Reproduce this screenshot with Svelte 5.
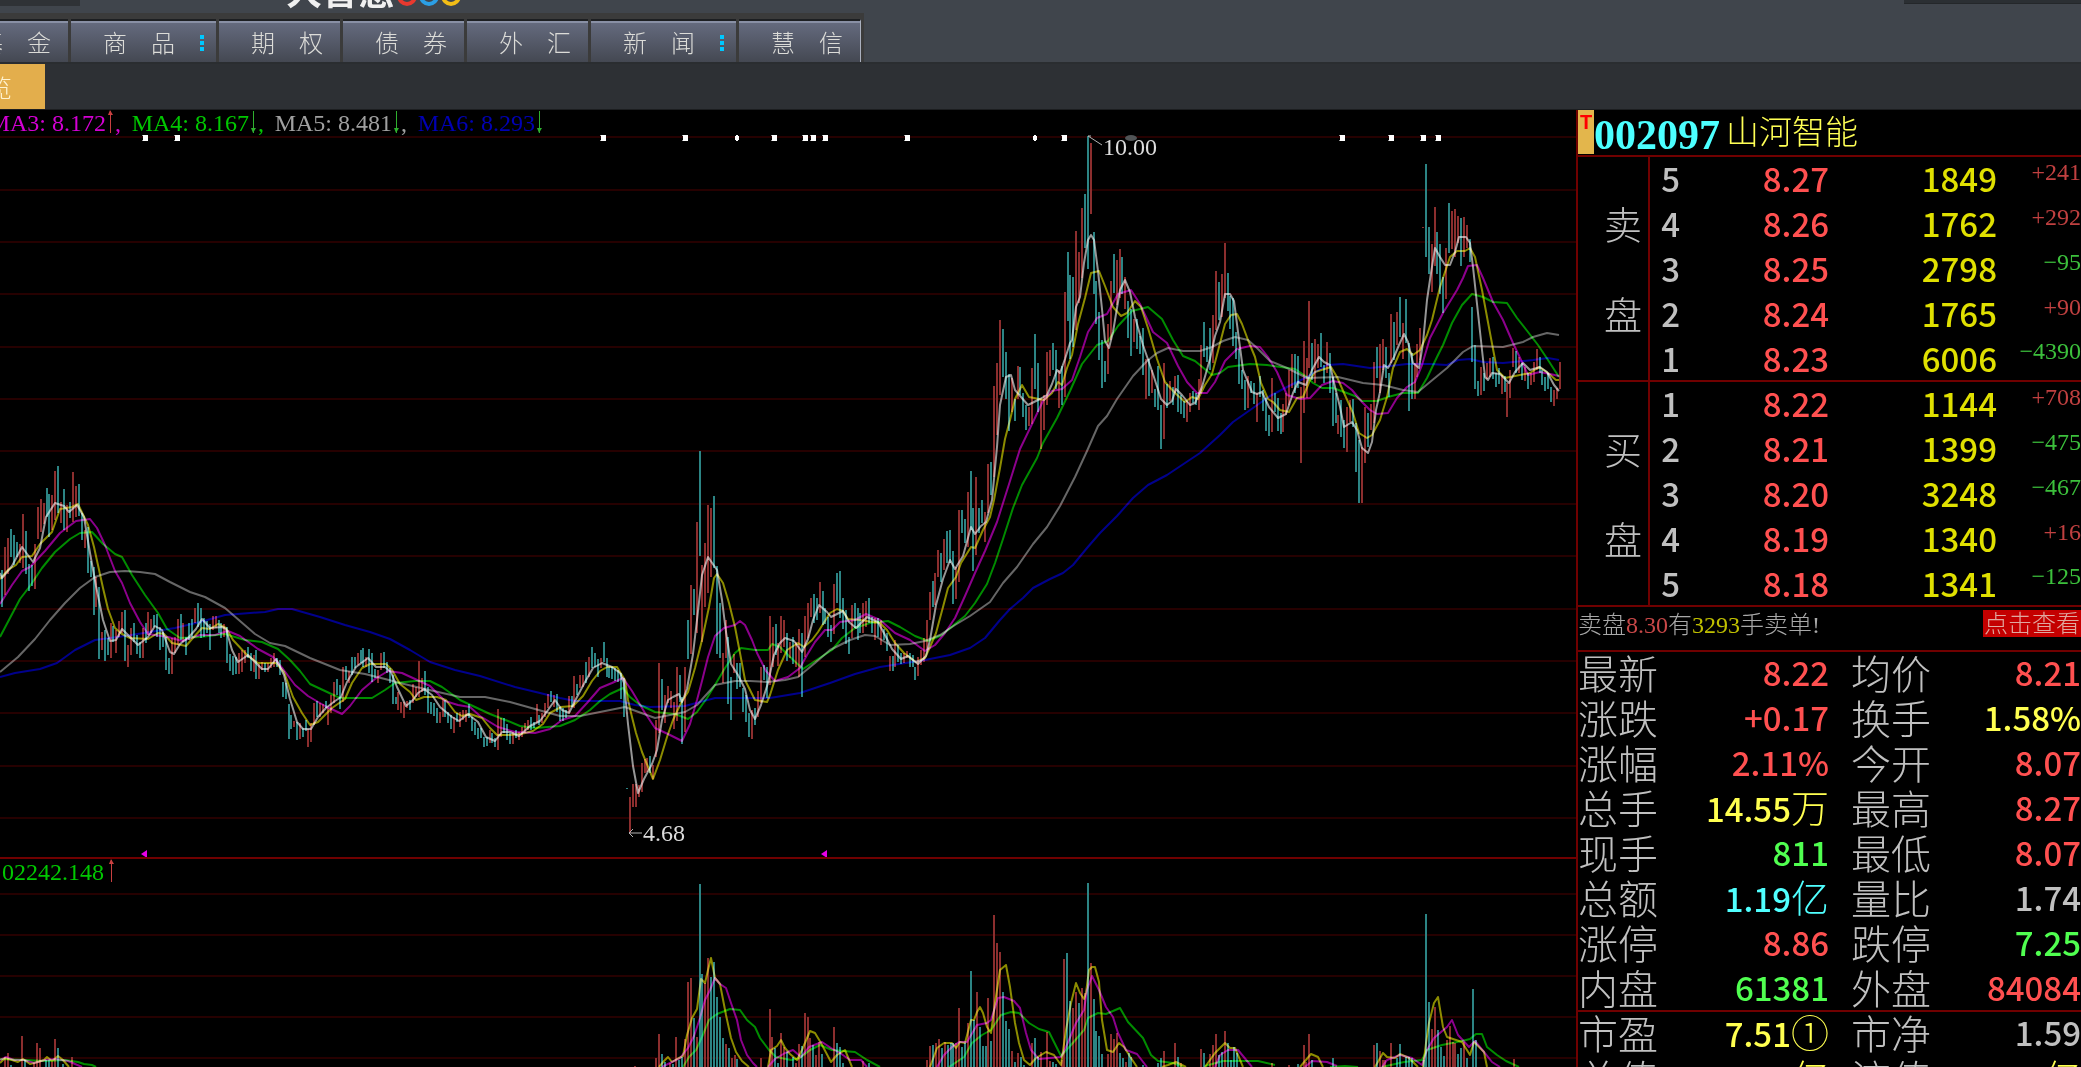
<script lang="ts">
  interface Bar {
    x: number;
    top: number;
    bottom: number;
    up: boolean;
  }

  const navItems = [
    { label: "基　金", more: false },
    { label: "商　品", more: true },
    { label: "期　权", more: false },
    { label: "债　券", more: false },
    { label: "外　汇", more: false },
    { label: "新　闻", more: true },
    { label: "慧　信", more: false },
  ];

  const averages = [
    { name: "MA3", value: "8.172", tone: "magenta", up: true },
    { name: "MA4", value: "8.167", tone: "green", up: false },
    { name: "MA5", value: "8.481", tone: "gray", up: false },
    { name: "MA6", value: "8.293", tone: "blue", up: false },
  ];

  const asks = [
    { side: "", level: 5, price: "8.27", volume: 1849, delta: 241 },
    { side: "卖", level: 4, price: "8.26", volume: 1762, delta: 292 },
    { side: "", level: 3, price: "8.25", volume: 2798, delta: -95 },
    { side: "盘", level: 2, price: "8.24", volume: 1765, delta: 90 },
    { side: "", level: 1, price: "8.23", volume: 6006, delta: -4390 },
  ];

  const bids = [
    { side: "", level: 1, price: "8.22", volume: 1144, delta: 708 },
    { side: "买", level: 2, price: "8.21", volume: 1399, delta: -475 },
    { side: "", level: 3, price: "8.20", volume: 3248, delta: -467 },
    { side: "盘", level: 4, price: "8.19", volume: 1340, delta: 16 },
    { side: "", level: 5, price: "8.18", volume: 1341, delta: -125 },
  ];

  const quote = [
    { label: "最新", value: "8.22", unit: "", tone: "red" },
    { label: "均价", value: "8.21", unit: "", tone: "red" },
    { label: "涨跌", value: "+0.17", unit: "", tone: "red" },
    { label: "换手", value: "1.58%", unit: "", tone: "yellow" },
    { label: "涨幅", value: "2.11%", unit: "", tone: "red" },
    { label: "今开", value: "8.07", unit: "", tone: "red" },
    { label: "总手", value: "14.55", unit: "万", tone: "yellow" },
    { label: "最高", value: "8.27", unit: "", tone: "red" },
    { label: "现手", value: "811", unit: "", tone: "lime" },
    { label: "最低", value: "8.07", unit: "", tone: "red" },
    { label: "总额", value: "1.19", unit: "亿", tone: "cyan" },
    { label: "量比", value: "1.74", unit: "", tone: "silver" },
    { label: "涨停", value: "8.86", unit: "", tone: "red" },
    { label: "跌停", value: "7.25", unit: "", tone: "lime" },
    { label: "内盘", value: "61381", unit: "", tone: "lime" },
    { label: "外盘", value: "84084", unit: "", tone: "red" },
  ];

  const valuation = [
    { label: "市盈", value: "7.51", unit: "①", tone: "yellow" },
    { label: "市净", value: "1.59", unit: "", tone: "silver" },
    { label: "总值", value: "", unit: "亿", tone: "yellow" },
    { label: "流值", value: "", unit: "亿", tone: "yellow" },
  ];

  // each run spreads its bars evenly from first to last; r = rising, t = falling
  const priceRuns = [
    {
      from: 2,
      to: 94,
      bars: "t570-607 r547-595 r538-574 t529-557 t535-565 t542-557 r544-563 r514-568 t531-574 t564-591 t565-586 r544-589 r507-539 r499-532 r503-524 t488-517 t494-537 r495-530 r471-520 t466-513 r502-523 t489-530 r505-532 t502-518 r472-522 r486-517 t484-516 t513-540 r530-548 t527-573 t561-577 t567-615",
    },
    {
      from: 96,
      to: 198,
      bars: "r577-607 t587-659 r632-650 t630-661 t638-655 r623-658 t626-642 r630-653 r621-637 r612-633 t610-661 r645-667 r628-655 t623-642 t635-654 t642-658 r628-658 t623-643 r612-635 r619-633 t615-627 t614-637 t627-650 t632-647 t637-670 t658-674 r638-674 r637-653 r619-645 t614-640 r623-642 t637-655 t623-640 t619-637 r608-623 t603-627",
    },
    {
      from: 201,
      to: 306,
      bars: "t608-638 t618-637 t621-633 t624-650 r616-630 r616-628 t620-633 t623-638 r624-637 t627-663 t654-671 t656-675 t657-674 r653-674 r650-672 r650-663 t647-658 t653-671 r655-672 t650-679 r664-679 r662-670 t663-672 r663-672 r658-668 r653-667 t658-667 t660-675 t682-697 t683-699 t704-739 t715-729 r721-727 t722-740 r723-739 t728-737 t720-731",
    },
    {
      from: 308,
      to: 416,
      bars: "r729-747 r723-742 r703-725 t701-717 r703-717 r704-713 t701-708 r708-725 r695-713 r682-703 t679-695 t685-709 r667-702 t666-680 r671-683 t657-675 t657-668 r653-665 t650-663 t648-667 r657-667 t649-673 t653-682 t669-678 r670-683 r653-670 t652-668 t662-673 t668-683 t675-704 t697-704 r692-710 r702-713 r702-718 r701-708 t700-710 r684-703 r687-697",
    },
    {
      from: 419,
      to: 516,
      bars: "r661-697 r678-692 t671-695 t687-713 t702-714 t703-716 t708-723 r712-723 r700-717 t700-717 t712-723 t715-729 r717-733 t713-722 r712-727 r710-720 r710-722 t704-718 t717-731 t722-735 t728-739 t728-738 t737-747 t737-746 r730-743 t733-743 t738-747 r709-750 r718-737 t718-733 t724-740 t733-744 r732-744 t730-738",
    },
    {
      from: 519,
      to: 624,
      bars: "r732-740 r727-737 r723-733 r720-730 t717-730 t722-728 r704-723 t715-725 r713-723 r703-717 r694-708 t691-702 r695-707 t694-712 t707-721 t708-721 t710-718 r696-713 t696-707 r676-708 t684-695 r675-688 r675-687 t662-683 r657-677 t647-668 t653-667 t659-677 r658-668 t642-662 t658-677 t667-678 t667-679 t668-681 t670-682 t673-699 t678-717",
    },
    {
      from: 627,
      to: 700,
      bars: "t788-789 r797-833 r784-807 r784-807 r785-797 r763-792 r759-773 r758-772 t756-773 r765-779 r720-757 r663-733 t679-710 r695-723 r686-703 r691-708 r702-729 r667-721 t675-702 t697-744 r667-732 t620-659 r585-654 t589-615 r522-633 t451-556",
    },
    {
      from: 702,
      to: 802,
      bars: "r565-642 r543-607 r505-593 r508-577 t496-568 t566-654 t603-658 r653-683 r620-658 t637-704 t677-720 r654-673 t663-689 t663-687 t688-712 t695-722 t713-737 r710-739 t708-725 r691-717 r667-703 t665-680 t667-698 r616-685 r627-667 t624-655 r643-666 r616-653 r620-647 t633-661 r642-658 t637-664 r642-667 r629-677 t633-697",
    },
    {
      from: 805,
      to: 913,
      bars: "r616-657 r603-638 r598-617 t594-623 t598-620 r582-613 t591-625 t608-624 t617-637 t625-642 r584-634 t573-603 t571-618 t598-629 t610-644 t637-654 r605-638 t603-628 t608-640 t613-633 r603-633 r601-627 t598-623 t617-633 r618-640 t618-637 r620-645 t629-640 t633-651 r656-671 t656-671 r640-667 t645-662 t653-664 r653-663 r651-658 t653-667 t655-667",
    },
    {
      from: 915,
      to: 991,
      bars: "t667-680 r657-676 r650-665 r638-662 r620-650 r592-620 t581-607 r573-605 r550-577 t553-582 r539-570 t531-563 t530-563 t551-604 r567-599 r510-582 t510-533 t519-543 r492-547 t471-530 t508-571 r477-555 t508-533 t500-523 r512-542 r464-513 t462-495",
    },
    {
      from: 994,
      to: 1094,
      bars: "r386-477 r363-435 r320-395 t329-377 t352-399 t374-431 r378-412 t399-421 r366-399 t367-395 t393-417 t405-430 r407-426 r368-424 t334-389 t363-412 r399-449 r395-430 r352-405 r350-376 t343-370 t350-389 r370-408 t366-405 r292-397 t252-321 t275-359 t277-347 r231-330 r252-303 r208-278 t194-248 t136-269 r143-214 t232-294",
    },
    {
      from: 1096,
      to: 1199,
      bars: "t281-324 t312-360 t340-388 t361-382 r324-374 r281-340 t254-293 r260-305 r249-298 t257-294 r277-309 t301-338 t309-356 r319-342 t319-349 t336-354 t328-375 r359-399 t359-396 r370-393 t389-407 t366-410 t405-449 r363-439 t384-408 r381-401 t387-405 r376-393 t375-412 t395-414 t401-418 r401-422 r393-412 t391-403 t393-405 r379-410",
    },
    {
      from: 1201,
      to: 1307,
      bars: "r345-393 t322-357 t346-362 t328-370 r315-363 r271-330 t282-320 r274-317 r243-298 t273-311 t296-329 t298-346 t332-359 t349-384 t370-389 t380-410 r376-408 t381-393 t383-404 r393-422 t376-397 t390-411 t398-431 t415-436 r378-432 t393-412 t398-431 t413-434 r404-432 r393-415 r370-405 r354-388 t354-393 t356-388 r387-463 r341-413 r358-398",
    },
    {
      from: 1309,
      to: 1415,
      bars: "r301-368 t343-380 r339-383 r344-368 t333-367 t365-383 r342-373 t353-393 t377-426 t393-423 r415-434 t400-437 t420-448 r407-452 r400-422 t399-427 t423-472 t440-503 r447-503 r407-463 t413-447 r404-430 r362-423 t347-378 r344-393 r339-370 t347-378 t373-397 r314-363 t322-360 r312-345 t297-337 r323-359 t299-343 t343-411 t353-399 r363-399",
    },
    {
      from: 1417,
      to: 1560,
      bars: "r344-377 r328-360 r227-228 t164-257 t227-274 r244-292 r207-266 t232-274 t244-294 t277-313 r248-299 t203-253 r211-249 r209-257 r216-243 t218-266 r217-257 r225-248 t239-262 t307-362 t345-389 t381-396 r367-395 t373-391 r363-379 r358-377 t357-379 t373-387 t368-384 r375-394 t376-392 r383-417 r370-398 r348-367 t351-373 r357-373 t363-380 r367-381 t373-389 r373-385 r362-382 r349-370 t357-373 t370-385 t377-391 t373-389 t387-402 r390-406 r388-399 r362-389",
    },
  ];

  const priceBars: Bar[] = priceRuns.flatMap((run) => {
    const tokens = run.bars.split(" ");
    const step = (run.to - run.from) / (tokens.length - 1);
    return tokens.map((token, i) => {
      const [top, bottom] = token.slice(1).split("-").map(Number);
      return { x: Math.round(run.from + i * step), top, bottom, up: token[0] === "r" };
    });
  });

  const volumeData =
    "r5-1057 r8-1053 t11-1065 r22-1036 t25-1060 r34-1063 r37-1043 r40-1048 t46-1060 t49-1060 r52-1062 r55-1039 t58-1048 t63-1064 r72-1057 " +
    "r635-1066 r656-1058 r659-1034 t662-1054 t665-1062 r670-1063 t673-1064 r676-1037 t679-1060 t682-1057 r685-1039 r688-982 r691-978 t694-1018 r697-1037 t700-884 t702-974 r705-983 r708-958 t711-977 t714-962 t717-997 t720-1017 t723-1038 r726-1044 t729-1048 r732-1058 r735-1055 t737-1059 " +
    "r761-1058 r770-1009 r772-1037 t775-1048 t778-1063 r781-1033 r784-1047 t787-1052 t793-1057 r796-1063 r799-1044 t802-1046 r805-1013 r808-1017 r810-1038 t813-1045 r816-1055 r819-1042 t822-1054 r834-1027 t837-1043 t840-1047 t843-1063 r863-1061 t869-1063 " +
    "r927-1060 r930-1046 t933-1045 r936-1043 r939-1039 t942-1048 r945-1042 t948-1045 t951-1043 t953-1043 r956-1043 r959-1008 t962-1047 t965-1043 r968-1023 t971-971 t974-1020 r977-992 t980-1027 t983-1046 t986-1046 r988-998 t991-1041 r994-915 r997-943 r1000-952 t1003-992 t1006-1021 t1009-1029 r1012-1051 t1015-1062 r1018-1053 t1021-1057 t1024-1065 " +
    "r1032-1043 t1035-1038 t1038-1057 r1041-1052 r1047-1032 r1050-1061 t1053-1062 t1056-1064 r1062-1060 r1064-959 t1067-953 t1070-1001 r1073-1008 r1076-992 t1079-1003 r1082-988 r1085-993 t1088-882 r1091-963 t1094-999 t1096-1031 t1099-1036 t1102-1054 r1108-1054 r1111-1034 r1114-1039 r1117-1033 t1120-1053 t1123-1058 r1126-1062 t1129-1053 t1131-1057 t1143-1065 " +
    "t1158-1063 t1161-1058 r1164-1051 r1175-1043 t1178-1057 r1181-1063 r1201-1049 t1204-1053 r1210-1054 r1213-1045 r1216-1034 t1219-1055 t1222-1052 r1225-1031 t1228-1043 t1231-1060 t1234-1047 t1237-1053 r1272-1063 r1289-1065 t1298-1064 r1304-1045 r1306-1062 r1309-1034 t1312-1060 t1333-1058 " +
    "r1374-1045 t1377-1043 r1380-1051 r1383-1060 r1385-1060 r1391-1043 t1397-1058 t1400-1044 t1406-1057 t1409-1057 t1412-1058 t1424-1060 t1426-914 t1429-1002 r1432-1029 r1435-1007 t1438-1030 t1441-1047 t1444-1056 r1447-1040 r1450-1026 r1453-1042 r1455-1043 t1458-1054 t1461-1048 r1464-1042 t1467-1058 t1473-989 t1476-1040 r1514-1059";

  const volumeBars: Bar[] = volumeData.split(" ").map((token) => {
    const [x, top] = token.slice(1).split("-").map(Number);
    return { x, top, bottom: 1067, up: token[0] === "r" };
  });

  const priceLines = [
    {
      tone: "blue",
      points: "0,677 15,673 40,669 57,663 75,650 95,640 125,636 150,632 175,628 200,622 225,615 250,613 265,612 278,609 292,609 320,617 345,625 370,632 390,639 410,650 430,662 455,670 480,676 515,687 540,693 560,698 575,701 620,701 635,705 650,707 685,706 700,702 715,698 770,698 800,693 830,683 855,674 880,667 925,660 950,655 970,648 985,638 1000,620 1010,609 1023,598 1033,588 1050,579 1063,573 1073,565 1087,548 1100,533 1117,516 1133,498 1148,485 1167,475 1182,465 1200,453 1220,435 1233,422 1253,408 1270,396 1287,387 1307,377 1327,365 1343,364 1370,368 1390,366 1407,364 1430,364 1447,365 1458,360 1470,359 1483,362 1503,363 1533,360 1548,358 1559,360",
    },
    {
      tone: "gray",
      points: "0,672 18,657 35,639 50,620 65,603 80,588 95,577 110,572 125,571 140,572 155,574 170,582 190,592 205,597 225,608 240,621 255,634 270,643 285,646 310,658 340,670 365,674 385,679 400,683 425,689 460,697 485,697 510,702 535,709 560,716 580,716 600,712 625,707 655,718 685,712 697,705 715,685 735,681 750,681 768,682 785,680 798,677 815,663 830,650 850,640 865,635 875,636 890,645 910,644 925,641 940,635 955,625 970,616 980,609 990,602 1003,583 1017,567 1033,544 1047,527 1060,506 1075,477 1087,451 1098,426 1107,416 1117,399 1133,376 1147,361 1157,353 1168,348 1183,351 1200,351 1212,347 1223,341 1235,337 1248,340 1257,348 1270,361 1287,368 1307,378 1338,377 1363,383 1383,385 1403,390 1418,392 1430,382 1447,368 1463,352 1473,346 1503,347 1523,342 1533,337 1547,333 1559,335",
    },
    {
      tone: "green",
      points: "0,637 10,618 20,599 30,586 42,568 55,552 70,539 80,533 92,532 103,544 115,554 122,557 132,575 145,595 158,613 167,629 180,638 200,637 225,634 245,640 262,642 278,649 290,660 300,671 310,684 325,691 340,698 372,698 385,690 395,683 415,681 430,681 442,687 460,700 475,707 490,714 508,721 520,726 535,728 560,726 575,720 590,710 600,701 610,694 623,688 630,697 640,705 655,712 675,714 688,719 697,712 707,698 715,685 725,668 735,653 741,648 755,650 768,650 772,644 780,647 790,657 803,669 818,659 832,650 842,638 855,628 870,623 888,621 900,627 915,636 928,641 942,635 955,624 965,616 975,603 987,584 995,563 1003,539 1013,508 1022,485 1037,458 1043,443 1057,418 1070,391 1082,364 1097,345 1108,341 1118,326 1132,311 1148,307 1162,319 1173,340 1183,356 1195,361 1212,375 1220,373 1228,367 1250,364 1267,365 1295,369 1307,377 1313,383 1322,388 1333,388 1355,396 1362,401 1377,401 1388,397 1403,393 1418,393 1427,378 1437,357 1443,345 1452,323 1462,305 1472,294 1483,297 1493,302 1507,303 1517,318 1528,332 1538,345 1548,360 1559,377",
    },
    {
      tone: "magenta",
      points: "0,604 12,585 22,571 30,567 45,551 60,533 76,521 90,519 97,528 105,545 115,571 122,583 130,603 140,622 148,634 168,637 182,641 200,635 215,635 228,631 240,636 258,649 273,657 283,669 295,685 308,696 325,706 342,714 350,706 362,690 375,679 388,671 402,673 415,679 430,686 445,701 458,705 470,707 480,716 498,727 515,732 535,733 550,729 562,720 575,716 587,703 600,688 612,683 623,678 632,691 645,713 655,728 670,735 682,741 690,724 697,700 702,681 708,657 715,636 724,628 735,625 740,621 745,625 752,640 757,653 766,671 775,681 788,677 800,668 807,655 815,642 825,630 832,630 840,622 855,620 866,614 880,620 895,633 910,640 925,651 935,645 945,633 955,618 965,596 975,573 985,551 997,522 1010,481 1020,449 1033,422 1043,401 1052,391 1062,389 1072,380 1080,357 1088,332 1097,318 1107,314 1118,294 1131,290 1140,304 1153,332 1167,343 1178,366 1187,382 1197,393 1207,393 1215,382 1225,361 1237,349 1250,346 1260,347 1268,357 1277,372 1287,395 1300,399 1310,398 1322,385 1333,381 1343,383 1352,390 1362,402 1370,410 1377,414 1388,413 1397,398 1407,387 1415,382 1422,365 1430,338 1443,313 1457,290 1463,278 1468,266 1477,265 1483,278 1493,302 1503,320 1513,343 1522,362 1528,375 1540,372 1550,374 1559,376",
    },
    {
      tone: "yellow",
      points: "0,579 8,570 16,565 22,557 32,556 40,544 52,532 60,509 72,507 78,504 88,525 94,547 103,588 108,609 115,628 122,634 130,638 148,639 158,633 164,634 172,643 186,646 192,639 202,628 210,629 218,624 226,628 233,640 248,656 258,663 276,663 284,672 293,697 302,713 310,725 318,722 332,708 345,699 352,683 362,668 370,664 386,664 392,670 400,684 410,692 416,700 424,697 437,697 446,700 455,712 462,716 470,714 482,718 490,728 497,735 510,735 521,734 533,731 543,724 550,713 561,707 573,706 583,696 592,681 600,671 607,667 617,667 620,672 625,680 628,700 632,717 636,733 642,752 653,779 660,760 667,737 673,720 681,703 688,692 695,668 702,640 709,607 714,578 717,574 723,583 729,603 735,627 740,653 745,680 755,700 767,702 770,695 778,670 787,650 798,643 804,647 812,640 818,632 830,613 837,609 843,611 848,619 860,620 880,623 887,630 895,643 904,653 916,662 925,658 930,647 936,633 943,607 948,588 956,577 961,563 971,547 975,548 983,530 990,517 994,500 1000,468 1005,439 1010,420 1015,399 1022,385 1029,397 1044,400 1052,393 1058,382 1062,385 1067,368 1072,355 1078,324 1085,298 1091,273 1099,271 1105,286 1113,307 1121,316 1127,313 1135,301 1141,307 1148,328 1157,359 1165,382 1175,393 1185,402 1192,397 1198,399 1205,385 1212,374 1218,351 1225,324 1231,315 1237,314 1242,324 1248,340 1255,357 1261,383 1268,399 1273,402 1280,410 1289,412 1297,398 1303,397 1310,380 1315,372 1331,367 1337,377 1344,393 1353,413 1359,433 1367,438 1372,435 1380,420 1387,397 1393,368 1400,352 1407,349 1413,355 1420,350 1427,335 1432,320 1440,287 1450,257 1457,251 1465,251 1470,248 1475,257 1482,290 1490,333 1497,370 1505,378 1515,376 1530,373 1539,367 1548,373 1556,380 1559,380",
    },
    {
      tone: "white",
      points: "0,573 2,578 12,566 22,547 33,562 40,548 46,517 55,503 64,506 69,512 77,505 84,517 90,553 96,586 103,620 110,641 116,640 122,629 130,637 138,645 148,637 155,626 162,630 170,652 174,654 180,644 189,637 196,629 202,619 210,628 222,627 226,629 232,650 238,662 248,655 262,669 268,669 276,659 284,675 290,699 297,722 303,729 311,729 318,717 326,708 335,701 341,697 347,682 356,667 368,658 376,667 385,667 391,672 397,687 406,706 413,700 418,693 424,689 432,695 440,707 452,717 459,721 468,714 478,722 486,737 495,741 502,732 510,732 519,736 530,726 540,721 548,710 555,700 562,710 569,713 577,697 585,682 593,668 602,663 612,667 620,673 624,683 628,724 633,766 638,793 644,779 652,764 657,750 662,720 668,700 673,697 679,694 682,702 687,689 693,654 697,620 702,575 708,557 717,570 722,600 726,632 731,664 738,675 745,689 750,710 755,719 761,705 768,683 774,655 780,643 785,638 794,641 802,652 808,639 813,620 819,605 827,612 831,617 843,611 849,622 856,628 867,617 878,622 886,637 892,649 901,659 908,656 914,661 918,664 926,656 930,640 936,605 943,579 950,560 955,569 963,556 971,527 975,534 981,526 986,522 992,500 994,479 997,447 1000,405 1006,377 1011,375 1015,390 1028,405 1040,399 1047,395 1052,384 1057,370 1060,373 1065,359 1070,343 1072,340 1076,307 1080,297 1084,263 1088,240 1091,235 1094,240 1098,271 1102,309 1105,341 1109,348 1113,332 1120,290 1125,280 1130,292 1135,317 1143,345 1153,374 1161,399 1167,405 1172,401 1176,389 1182,395 1190,405 1195,403 1202,387 1210,359 1215,336 1220,322 1225,294 1230,294 1234,301 1238,332 1243,370 1252,392 1257,394 1262,392 1269,407 1278,418 1286,414 1293,393 1298,382 1306,385 1312,370 1319,357 1324,362 1330,365 1335,387 1340,407 1344,427 1352,422 1357,430 1362,448 1368,453 1372,442 1376,410 1380,392 1384,365 1388,368 1394,357 1399,345 1404,334 1408,342 1413,363 1419,368 1423,343 1427,300 1431,273 1435,248 1440,257 1445,265 1450,265 1455,252 1459,237 1466,237 1470,243 1473,267 1478,313 1482,350 1485,377 1488,380 1492,373 1500,374 1509,383 1515,372 1523,363 1530,370 1540,367 1547,372 1554,385 1559,391",
    },
  ];

  const volumeLines = [
    { tone: "green", points: "0,1059 25,1060 45,1061 65,1060 78,1062 84,1064 92,1065 96,1067" },
    { tone: "green", points: "683,1067 689,1057 696,1050 702,1037 709,1020 717,1014 730,1009 740,1010 747,1020 755,1027 760,1038 769,1050 776,1057 791,1060 800,1058 810,1050 820,1045 832,1050 855,1052 867,1060 880,1067" },
    { tone: "green", points: "949,1067 964,1057 972,1043 982,1035 991,1030 1001,1015 1011,1012 1019,1013 1029,1023 1039,1029 1049,1032 1061,1056 1071,1045 1084,1030 1088,1018 1098,1013 1106,1014 1120,1008 1128,1022 1143,1038 1151,1055 1158,1061 1173,1063 1183,1067" },
    { tone: "green", points: "1205,1066 1223,1061 1258,1061 1275,1065" },
    { tone: "green", points: "1330,1067 1345,1066 1358,1067" },
    { tone: "green", points: "1382,1067 1404,1062 1422,1060 1427,1050 1442,1045 1462,1041 1470,1039 1476,1034 1482,1034 1487,1047 1497,1055 1506,1061 1519,1067" },
    { tone: "magenta", points: "0,1060 6,1057 14,1060 24,1060 34,1063 45,1060 55,1059 68,1061 82,1067" },
    { tone: "magenta", points: "662,1067 672,1062 680,1058 688,1048 694,1036 700,1018 705,1000 710,990 715,978 720,984 726,988 731,1003 737,1020 741,1040 747,1055 753,1063 757,1067" },
    { tone: "magenta", points: "768,1067 775,1059 785,1053 793,1050 801,1057 809,1047 822,1042 831,1048 840,1053 850,1060 861,1060 867,1067" },
    { tone: "magenta", points: "937,1067 944,1055 952,1047 959,1042 967,1042 977,1025 987,1023 991,1020 998,998 1004,997 1014,1001 1020,1008 1026,1033 1031,1050 1039,1059 1061,1057 1066,1047 1076,1023 1084,1010 1087,990 1092,976 1099,990 1106,1007 1113,1017 1118,1033 1126,1050 1137,1054 1147,1067" },
    { tone: "magenta", points: "1215,1067 1220,1055 1228,1050 1238,1050 1252,1067" },
    { tone: "magenta", points: "1305,1067 1312,1061 1327,1062 1337,1066" },
    { tone: "magenta", points: "1382,1067 1387,1060 1400,1055 1412,1058 1422,1065 1427,1050 1434,1038 1447,1027 1452,1020 1458,1035 1469,1047 1475,1041 1484,1052 1492,1062 1500,1067" },
    { tone: "yellow", points: "0,1063 5,1058 12,1060 18,1062 23,1059 30,1064 38,1062 44,1060 47,1057 52,1061 58,1056 63,1060 69,1067" },
    { tone: "yellow", points: "659,1067 664,1061 668,1057 672,1062 677,1059 683,1056 687,1035 692,1018 697,1009 701,979 705,983 708,970 711,958 715,978 720,984 726,1015 731,1038 736,1052 742,1061 749,1067" },
    { tone: "yellow", points: "768,1067 771,1050 777,1046 781,1040 785,1048 790,1054 797,1060 802,1050 810,1031 815,1033 821,1043 831,1062 837,1055 845,1050 852,1067" },
    { tone: "yellow", points: "930,1067 937,1048 944,1043 952,1043 956,1048 960,1042 965,1043 971,1020 974,1020 977,1012 980,1007 983,1013 987,1027 991,1033 995,1003 1000,970 1006,965 1010,987 1015,1023 1019,1043 1024,1060 1030,1065 1036,1058 1046,1052 1054,1055 1061,1065 1066,1030 1071,1003 1076,983 1080,993 1084,999 1086,993 1089,970 1092,967 1095,967 1099,982 1102,1020 1107,1050 1113,1052 1119,1043 1124,1047 1131,1058 1137,1067" },
    { tone: "yellow", points: "1162,1067 1168,1065 1176,1062 1186,1067" },
    { tone: "yellow", points: "1205,1067 1215,1053 1225,1043 1230,1048 1235,1048 1243,1067" },
    { tone: "yellow", points: "1300,1067 1311,1054 1318,1057 1323,1067" },
    { tone: "yellow", points: "1375,1067 1383,1053 1387,1057 1395,1058 1400,1054 1409,1058 1418,1067" },
    { tone: "yellow", points: "1423,1067 1426,1043 1429,1023 1434,1003 1438,997 1443,1027 1447,1037 1462,1042 1470,1055 1474,1042 1484,1052 1487,1067" },
  ];

  const priceGrid = [136, 189, 241, 293, 346, 398, 450, 503, 555, 608, 660, 712, 765, 817];
  const volumeGrid = [893, 934, 975, 1016, 1057];
  const events = [145, 177, 603, 685, 774, 805, 813, 825, 907, 1064, 1342, 1391, 1423, 1438];
  const minorEvents = [737, 1035];
  const flags = [144, 824];

  const signed = (n: number) => (n < 0 ? `−${-n}` : `+${n}`);
</script>

{#snippet trend(up: boolean)}
  <svg class="trend" class:up width="7" height="24" viewBox="0 0 7 24">
    {#if up}
      <path d="M3 1h1v22h-1z" /><path d="M3 0L6 5H1z" />
    {:else}
      <path d="M3 1h1v22h-1z" /><path d="M3 23L6 18H1z" />
    {/if}
  </svg>
{/snippet}

{#snippet bars(list: Bar[])}
  {#each list as bar}
    <rect class={bar.up ? "rise" : "fall"} x={bar.x - 1} y={bar.top} width="2" height={bar.bottom - bar.top} />
  {/each}
{/snippet}

{#snippet book(rows: typeof asks)}
  <tbody>
    {#each rows as row}
      <tr>
        <th class="side">{row.side}</th>
        <td class="level">{row.level}</td>
        <td class="red">{row.price}</td>
        <td class="vol">{row.volume}</td>
        <td class="delta" class:down={row.delta < 0}>{signed(row.delta)}</td>
      </tr>
    {/each}
  </tbody>
{/snippet}

{#snippet stats(items: typeof quote)}
  <dl class="stats">
    {#each items as item}
      <dt>{item.label}</dt>
      <dd class={item.tone}>{item.value}{#if item.unit}<span class="unit">{item.unit}</span>{/if}</dd>
    {/each}
  </dl>
{/snippet}

<div class="app">
  <header>
    <div class="title-bar">
      <div class="menu-edge"></div>
      <div class="brand">
        <span>大智慧</span>
        <svg width="66" height="20" viewBox="0 0 66 20" fill="none" stroke-width="4">
          <circle cx="10" cy="10" r="8" stroke="#e8392f" />
          <circle cx="32" cy="10" r="8" stroke="#2b9fe6" />
          <circle cx="54" cy="10" r="8" stroke="#f2bd16" />
        </svg>
      </div>
      <div class="window-edge"></div>
    </div>
    <nav>
      {#each navItems as item}
        <button type="button" class:more={item.more}>
          {item.label}
          {#if item.more}
            <svg width="4" height="16" viewBox="0 0 4 16" fill="#00c8ff">
              <rect width="4" height="4" /><rect y="6" width="4" height="4" /><rect y="12" width="4" height="4" />
            </svg>
          {/if}
        </button>
      {/each}
    </nav>
  </header>

  <div class="tabs">
    <button type="button" class="tab">览</button>
  </div>

  <main>
    <section class="charts">
      <div class="legend">
        {#each averages as ma, i}
          <span class="entry {ma.tone}">{ma.name}: {ma.value}{@render trend(ma.up)}<span class="comma">{i < 3 ? "," : ""}</span></span>
        {/each}
      </div>
      <svg class="price" viewBox="0 135 1576 722" preserveAspectRatio="xMaxYMin slice">
        {#each priceGrid as y}
          <rect class="grid" x="0" {y} width="1576" height="2" />
        {/each}
        {@render bars(priceBars)}
        {#each priceLines as line}
          <polyline class={line.tone} points={line.points} />
        {/each}
        {#each events as x}
          <path class="event-corner" d="M{x - 3} 135l6 6m0 -6l-6 6" />
          <rect class="event" x={x - 2} y="135" width="5" height="6" />
        {/each}
        {#each minorEvents as x}
          <path class="event" d="M{x - 1} 135h2v1h1v4h-1v1h-2v-1h-1v-4h1z" />
        {/each}
        <ellipse cx="1131" cy="138" rx="6" ry="3" fill="#505456" />
        <path class="pointer" d="M1088 136l14 9M1088 136l3 0" />
        <text x="1103" y="155">10.00</text>
        <path class="pointer" d="M629 833h13M633 829l-4 4 4 4" />
        <text x="643" y="841">4.68</text>
        {#each flags as x}
          <path class="flag" d="M{x + 3} 850v8l-6 -4z" />
        {/each}
      </svg>
      <div class="legend volume-legend">
        <span class="green">02242.148</span>{@render trend(true)}
      </div>
      <svg class="volume" viewBox="0 883 1576 184" preserveAspectRatio="xMaxYMin slice">
        {#each volumeGrid as y}
          <rect class="grid" x="0" {y} width="1576" height="2" />
        {/each}
        {@render bars(volumeBars)}
        {#each volumeLines as line}
          <polyline class={line.tone} points={line.points} />
        {/each}
      </svg>
    </section>

    <aside>
      <div class="stock">
        <span class="badge">T</span>
        <span class="code">002097</span>
        <span class="name">山河智能</span>
      </div>
      <table>
        <colgroup>
          <col class="c-side" /><col class="c-level" /><col class="c-price" /><col class="c-vol" /><col />
        </colgroup>
        {@render book(asks)}
        {@render book(bids)}
      </table>
      <div class="notice">
        <span>卖盘<b class="warn">8.30</b>有<b class="amount">3293</b>手卖单!</span>
        <button type="button">点击查看</button>
      </div>
      {@render stats(quote)}
      {@render stats(valuation)}
    </aside>
  </main>
</div>

<style>
  :global(body) {
    background: #000;
    overflow: hidden;
  }

  .app {
    display: flex;
    flex-direction: column;
    height: 100vh;
    overflow: hidden;
    font-family: "Liberation Serif", "Noto Sans CJK SC", serif;
    font-size: 24px;
  }

  button {
    border: 0;
    border-radius: 0;
    font: inherit;
    cursor: pointer;
  }

  header {
    flex: none;
    background: #40454c;
    border-bottom: 2px solid #2a2d30;
  }

  .title-bar {
    display: flex;
    align-items: flex-start;
    height: 13px;
    overflow: hidden;
  }

  .menu-edge {
    width: 80px;
    height: 6px;
    background: #2f3236;
  }

  .brand {
    display: flex;
    align-items: flex-end;
    gap: 3px;
    height: 6px;
    margin-left: 206px;
    color: #f0f0f0;
    font-size: 36px;
    font-weight: 700;
    line-height: 44px;
  }

  .brand span {
    margin-bottom: -9px;
  }

  .window-edge {
    width: 177px;
    height: 3px;
    margin-left: auto;
    background: #2b2f33;
    border-bottom: 1px solid #24272a;
  }

  nav {
    display: flex;
    gap: 3px;
    width: max-content;
    margin-left: -53px;
    padding: 6px 3px 0 0;
    background: #3b3b3b;
  }

  nav button {
    display: flex;
    align-items: center;
    height: 43px;
    padding: 0 17px 0 32px;
    border-top: 2px solid #1d1f22;
    box-shadow: inset 0 2px #8990a5;
    background: linear-gradient(#666c80, #444852);
    color: #dcdcd8;
    font-weight: 300;
  }

  nav button:last-child {
    border-right: 1px solid #aab0be;
  }

  nav button.more {
    gap: 25px;
    padding-right: 12px;
  }

  nav button svg {
    margin-top: 3px;
  }

  .tabs {
    display: flex;
    flex: none;
    height: 45px;
    background: #2d3034;
    border-bottom: 1px solid #1c1e20;
  }

  .tab {
    margin-left: -12px;
    padding: 0 33px 0 0;
    background: #e3ae4c;
    color: #fff3d0;
    font-weight: 300;
  }

  main {
    display: grid;
    flex: 1;
    grid-template-columns: 1fr 505px;
    min-height: 0;
  }

  .charts {
    display: flex;
    flex-direction: column;
    min-width: 0;
  }

  .legend {
    display: grid;
    flex: none;
    grid-auto-flow: column;
    grid-auto-columns: 143px;
    height: 25px;
    margin-left: -20px;
    line-height: 27px;
    white-space: nowrap;
  }

  .entry {
    display: flex;
    justify-content: flex-end;
    gap: 1px;
  }

  .comma {
    width: 8px;
  }

  .volume-legend {
    display: flex;
    gap: 4px;
    height: 24px;
    margin-left: 2px;
    line-height: 26px;
  }

  .trend {
    fill: #2fb02f;
  }

  .trend.up {
    fill: #c84040;
  }

  .legend .magenta {
    color: #d400d4;
  }

  .legend .green {
    color: #00c800;
  }

  .legend .gray {
    color: #a0a0a0;
  }

  .legend .blue {
    color: #0000b4;
  }

  .price,
  .volume {
    display: block;
    width: 100%;
    min-height: 0;
  }

  .price {
    flex: 722 1 0;
    border-bottom: 2px solid #700000;
  }

  .volume {
    flex: 184 1 0;
  }

  .grid {
    fill: #260000;
  }

  .rise {
    fill: #8c2e2e;
  }

  .fall {
    fill: #2c8484;
  }

  polyline {
    fill: none;
    stroke-width: 2;
    stroke-linejoin: round;
    mix-blend-mode: screen;
  }

  polyline.white {
    stroke: #969696;
  }

  polyline.yellow {
    stroke: #8c8c00;
  }

  polyline.magenta {
    stroke: #8c008c;
  }

  polyline.green {
    stroke: #008c00;
  }

  polyline.gray {
    stroke: #666;
  }

  polyline.blue {
    stroke: #00008c;
  }

  .event {
    fill: #fff;
  }

  .event-corner {
    stroke: #999;
    stroke-width: 1;
  }

  .pointer {
    fill: none;
    stroke: #b4b4b4;
  }

  .flag {
    fill: #e800e8;
  }

  .price text {
    fill: #dcdcdc;
    font-size: 24px;
  }

  aside {
    min-width: 0;
    border-left: 2px solid #700000;
    overflow: hidden;
  }

  .stock {
    display: flex;
    align-items: center;
    height: 45px;
    border-bottom: 2px solid #700000;
  }

  .badge {
    align-self: flex-start;
    width: 16px;
    height: 44px;
    background: #e3b64c;
    color: #f00;
    font: 700 20px/24px "Liberation Sans", sans-serif;
    text-align: center;
  }

  .code {
    padding-top: 6px;
    color: #4cffff;
    font-size: 42px;
    font-weight: 700;
    line-height: 45px;
  }

  .name {
    margin-left: 6px;
    color: #ffff55;
    font-size: 33px;
    font-weight: 300;
    line-height: 40px;
  }

  table {
    width: 100%;
    table-layout: fixed;
    border-collapse: separate;
    border-spacing: 0;
    font-family: "Noto Sans CJK SC", sans-serif;
  }

  .c-side {
    width: 72px;
  }

  .c-level {
    width: 30px;
  }

  .c-price {
    width: 149px;
  }

  .c-vol {
    width: 168px;
  }

  th,
  td {
    height: 45px;
    padding: 0 0 3px;
    font-size: 33px;
    font-weight: 500;
    line-height: 40px;
    text-align: right;
    box-sizing: border-box;
  }

  tbody tr:last-child > * {
    padding-bottom: 1px;
    border-bottom: 2px solid #700000;
  }

  .side {
    padding-right: 6px;
    border-right: 2px solid #700000;
    color: #c0c0c0;
    font-size: 38px;
    font-weight: 300;
  }

  .level {
    color: #c0c0c0;
  }

  .vol {
    color: #e0e000;
  }

  tbody tr > .delta {
    padding-bottom: 14px;
    color: #c04040;
    font: 24px/29px "Liberation Serif", serif;
  }

  tbody tr > .delta.down {
    color: #3cc03c;
  }

  .notice {
    display: flex;
    justify-content: space-between;
    align-items: flex-start;
    height: 43px;
    border-bottom: 2px solid #700000;
    color: #a8a8a8;
    font-weight: 300;
    line-height: 36px;
  }

  .notice b {
    font-weight: 400;
  }

  .notice .warn {
    color: #c84848;
  }

  .notice .amount {
    color: #c0c000;
  }

  .notice button {
    height: 27px;
    margin-top: 3px;
    padding: 0 1px;
    background: #c40000;
    color: #e0a8a0;
    line-height: 29px;
  }

  .stats {
    display: grid;
    grid-template-columns: 80px 171px 80px 1fr;
    grid-auto-rows: 45px;
    margin: 0;
    font-family: "Noto Sans CJK SC", sans-serif;
    line-height: 41px;
  }

  .stats + .stats {
    margin-top: -2px;
    border-top: 2px solid #700000;
  }

  dt {
    color: #c0c0c0;
    font-family: "Liberation Serif", "Noto Sans CJK SC", serif;
    font-size: 40px;
    font-weight: 300;
    line-height: 47px;
  }

  dt:nth-of-type(even) {
    margin-left: 22px;
    white-space: nowrap;
  }

  dd {
    margin: 0;
    font-size: 33px;
    font-weight: 500;
    text-align: right;
    white-space: nowrap;
  }

  .unit {
    font-size: 38px;
    font-weight: 300;
    line-height: 1;
  }

  .red {
    color: #ff5050;
  }

  .yellow {
    color: #ffff50;
  }

  .lime {
    color: #50ff50;
  }

  .cyan {
    color: #50ffff;
  }

  .silver {
    color: #c0c0c0;
  }
</style>
